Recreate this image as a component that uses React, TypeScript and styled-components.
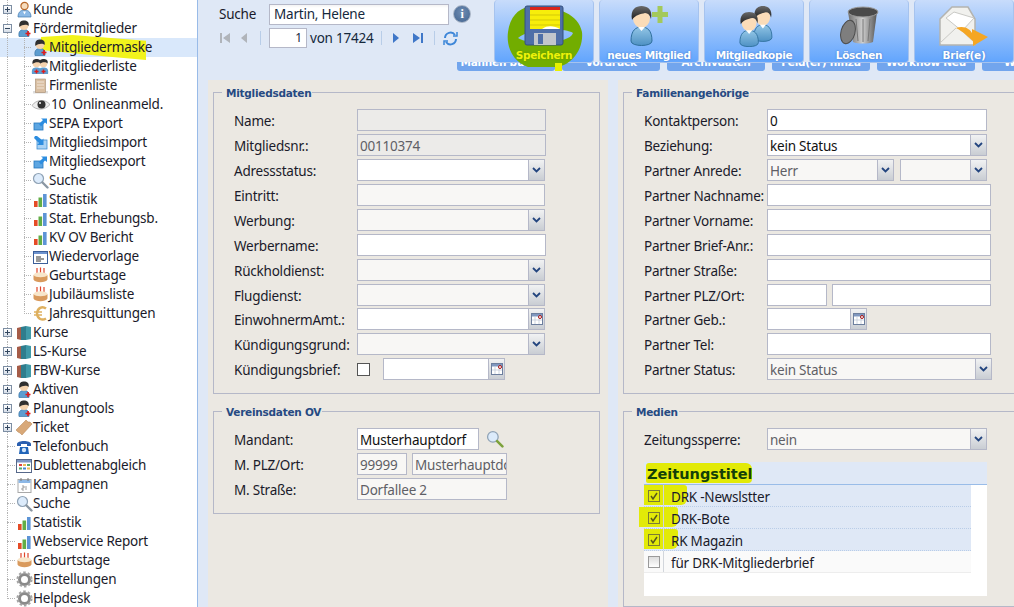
import React from 'react';
import styled, { createGlobalStyle } from 'styled-components';

const Global = createGlobalStyle`
  html, body { margin: 0; padding: 0; width: 1014px; height: 607px; overflow: hidden; background: #fff; }
  * { box-sizing: border-box; }
  body { font-family: "Noto Sans", "Liberation Sans", sans-serif; font-size: 13.5px; letter-spacing: -0.22px; color: #15283c; }
`;

const Page = styled.div`display: flex; width: 1014px; height: 607px; overflow: hidden;`;
const Sidebar = styled.nav`
  width: 198px; flex: none; height: 607px; background: #fff; border-right: 1px solid #99bbe8;
  display: flex; flex-direction: column;
`;
const TreeRow = styled.div<{ $sel?: boolean; $level: number }>`
  position: relative; height: 19px; flex: none; display: flex; align-items: center; white-space: pre;
  padding-left: ${p => (p.$level === 1 ? 31 : 15)}px; background: ${p => (p.$sel ? '#d9e8fb' : 'transparent')};
`;
const TreeIcon = styled.span<{ $w: number }>`width: ${p => p.$w}px; height: 17px; flex: none; display: flex; align-items: center; justify-content: center; position: relative; z-index: 1;`;
const TreeLabel = styled.span`font-size: 13.5px; color: #1a1a2a; position: relative; top: -1px; z-index: 1;`;
const GuideV = styled.span<{ $x: number; $half?: boolean }>`
  position: absolute; left: ${p => p.$x}px; top: 0; height: ${p => (p.$half ? '10px' : '100%')}; border-left: 1px dotted #b4b4b4;
`;
const GuideH = styled.span<{ $x: number; $w: number }>`
  position: absolute; left: ${p => p.$x}px; top: 9px; width: ${p => p.$w}px; border-top: 1px dotted #b4b4b4;
`;
const Toggle = styled.span`
  position: absolute; left: 3px; top: 5px; width: 9px; height: 9px; border: 1px solid #7d8ea3; background: linear-gradient(#fff,#d5dde8); z-index: 1;
  &::before { content: ''; position: absolute; left: 1px; right: 1px; top: 3px; height: 1px; background: #33475f; }
`;
const TogglePlus = styled(Toggle)`
  &::after { content: ''; position: absolute; top: 1px; bottom: 1px; left: 3px; width: 1px; background: #33475f; }
`;
const Hilite = styled.span`
  position: absolute; left: 41px; top: -3px; width: 105px; height: 26px; background: #f2f31c;
  clip-path: polygon(0 8%, 30% 0, 100% 22%, 100% 96%, 60% 82%, 0 58%);
`;

const Main = styled.main`flex: 1; min-width: 0; background: #dfe8f6; display: flex; flex-direction: column; position: relative;`;
const Toolbar = styled.header`height: 80px; flex: none; position: relative; overflow: hidden;`;
const SearchArea = styled.div`width: 296px; padding: 2px 0 0 21px; display: flex; flex-direction: column;`;
const SearchRow = styled.div`display: flex; align-items: center; height: 24px;`;
const SearchLabel = styled.label`width: 50px; color: #1a1a2a;`;
const SearchInput = styled.div`width: 180px; height: 21px; border: 1px solid #b5b8c8; background: linear-gradient(#f3f3f3 0,#fff 3px); padding-left: 4px; line-height: 19px;`;
const InfoDot = styled.span`
  margin-left: 4px; width: 18px; height: 18px; border-radius: 50%; background: radial-gradient(circle at 50% 40%, #6f8db3, #41638f); border: 1px solid #a9b5c6;
  color: #fff; font: bold 12px "Liberation Serif", serif; text-align: center; line-height: 16px;
`;
const PagerRow = styled.div`display: flex; align-items: center; height: 22px; margin-top: 1px;`;
const PagerBtn = styled.span<{ $gap: number }>`width: 12px; height: 16px; display: flex; align-items: center; justify-content: center; margin-right: ${p => p.$gap}px;`;
const Sep = styled.span`width: 1px; height: 14px; background: #b8cde8; margin: 0 8px 0 3px;`;
const PageInput = styled.div`width: 38px; height: 20px; border: 1px solid #b5b8c8; background: #fff; font-size: 12px; line-height: 18px; text-align: right; padding-right: 4px;`;
const PageText = styled.span`margin: 0 2px 0 3px; width: 66px; white-space: nowrap;`;

const Tabs = styled.div`position: absolute; left: 259px; top: 62px; display: flex; gap: 7px; height: 9px;`;
const SubTab = styled.div`
  width: 98px; height: 9px; background: #72a5ed; border-radius: 0 0 3px 3px; color: #fff; font-family: "DejaVu Sans", sans-serif; font-size: 10.5px; font-weight: bold; text-align: center; line-height: 1px; overflow: hidden; white-space: nowrap;
`;
const Buttons = styled.div`position: absolute; left: 296px; top: 0; display: flex; gap: 5px;`;
const Btn = styled.div`
  position: relative; width: 100px; height: 63px; background: linear-gradient(#c8dcfb, #62a5fd); border: 1px solid #a6c3ee; border-top: none; border-radius: 4px;
  display: flex; flex-direction: column; align-items: center;
`;
const BtnIcon = styled.div`height: 47px; display: flex; align-items: center; justify-content: center; margin-top: 2px; position: relative; z-index: 1;`;
const BtnText = styled.div<{ $y?: boolean }>`
  font-family: "DejaVu Sans", sans-serif; font-size: 10.5px; font-weight: bold; color: ${p => (p.$y ? '#eef20a' : '#fff')}; letter-spacing: -0.3px; position: relative; z-index: 1;
  text-shadow: 0 0 2px ${p => (p.$y ? '#5f9400' : '#3e74c4')}; line-height: 13px;
`;
const GreenRing = styled.svg`position: absolute; left: 13px; top: 7px; overflow: visible;`;

const Content = styled.div`flex: 1; display: grid; grid-template-columns: 400px 1fr; margin-left: 10px; column-gap: 10px; min-height: 0;`;
const Panel = styled.section`background: #ebe8e2; padding: 12px 8px 0 5px; height: 100%; overflow: hidden; display: flex; flex-direction: column; gap: 17px;`;
const PanelR = styled(Panel)`padding-right: 0;`;
const Field = styled.fieldset<{ $h: number; $open?: boolean }>`
  margin: 0 ${p => (p.$open ? '-12px' : '0')} 0 0; padding: 16px 0 0 16px; border: 1px solid #b5b8c8; height: ${p => p.$h}px; flex: none; position: relative; min-width: 0;
`;
const Legend = styled.span`
  position: absolute; top: -7px; left: 8px; padding: 0 1px 0 4px; background: #ebe8e2; font-size: 10.5px; font-weight: bold; line-height: 14px; color: #264a82; font-family: "DejaVu Sans", sans-serif; letter-spacing: -0.25px;
`;
const Row = styled.div<{ $up?: boolean }>`display: flex; height: 25px; align-items: flex-start; margin-top: ${p => (p.$up ? '-1px' : '0')};`;
const Lab = styled.label`width: 127px; padding-left: 4px; flex: none; line-height: 24px; color: #1a1a2a; white-space: nowrap;`;
const Input = styled.div<{ $w: number; $dis?: boolean; $grey?: boolean }>`
  width: ${p => p.$w}px; height: 22px; flex: none; border: 1px solid #b5b8c8; background: ${p => (p.$grey ? '#ecebe9' : p.$dis ? '#f8f7f5' : '#fff')};
  line-height: 22px; padding-left: 2px; overflow: hidden; white-space: nowrap; color: ${p => (p.$dis || p.$grey ? '#5f5f66' : '#111')};
`;
const Combo = styled.div<{ $w: number; $dis?: boolean }>`
  width: ${p => p.$w}px; height: 22px; flex: none; display: flex; border: 1px solid #b5b8c8; border-right: none; background: ${p => (p.$dis ? '#f8f7f5' : '#fff')};
  line-height: 22px; padding-left: 2px; color: ${p => (p.$dis ? '#5f5f66' : '#111')};
`;
const ComboText = styled.span`flex: 1; min-width: 0; height: 20px; overflow: hidden; white-space: nowrap;`;
const Trigger = styled.span`
  width: 17px; flex: none; height: 20px; background: linear-gradient(#f1f2f3,#c9cdd3); border-left: 1px solid #b5b8c8; border-right: 1px solid #b5b8c8; display: flex; align-items: center; justify-content: center;
`;
const Gap = styled.span<{ $w: number }>`width: ${p => p.$w}px; flex: none;`;
const Check = styled.span`width: 13px; height: 13px; border: 1px solid #555; background: #fff; margin-top: 5px; flex: none;`;
const Lens = styled.span`margin-left: 7px; margin-top: 2px; display: flex;`;

const Grid = styled.div`width: 343px; height: 134px; background: #fff; margin-left: 4px; margin-top: 9px;`;
const GridHead = styled.div`
  height: 23px; background: #dfe8f6; border-bottom: 1px solid #99bce8; font-family: "DejaVu Sans", sans-serif; font-weight: bold; font-size: 14.5px; letter-spacing: 0; padding-left: 3px; line-height: 24px; color: #143f08; position: relative;
`;
const HeadMark = styled.span`position: absolute; left: 2px; top: 1px; width: 106px; height: 20px; background: #e2ea08; border-radius: 3px 6px 4px 2px;`;
const HeadText = styled.span`position: relative;`;
const GridRow = styled.div<{ $on: boolean }>`
  width: 327px; height: 22px; display: flex; position: relative; background: ${p => (p.$on ? '#dfe8f6' : '#fafafa')}; border-bottom: 1px ${p => (p.$on ? 'dotted #b9cde8' : 'solid #ededed')};
  line-height: 24px; color: #1a1a2a;
`;
const CheckCell = styled.span`width: 20px; flex: none; border-right: 1px solid #d2d6dc; display: flex; align-items: center; justify-content: center; position: relative;`;
const GridText = styled.span`padding-left: 7px; position: relative;`;
const YMark = styled.span<{ $l: number; $w: number }>`position: absolute; left: ${p => p.$l}px; width: ${p => p.$w}px; top: 0; height: 20px; background: #e2ea08; border-radius: 0 3px 6px 0;`;
const Box = styled.span<{ $on: boolean }>`
  position: relative; width: 12px; height: 12px; border: 1px solid ${p => (p.$on ? '#7c7c35' : '#9a9a9a')}; background: ${p => (p.$on ? 'transparent' : 'linear-gradient(#ddd,#fff)')}; display: flex; align-items: center; justify-content: center;
`;
const CopyIcon = styled.span`display: flex; margin-left: 4px;`;
const CheckMark = styled.svg`position: absolute;`;

const person = (
  <svg width="15" height="17" viewBox="0 0 15 17">
    <path d="M2 16.500 C1 11 4 9.500 7 9.500 C10 9.500 13 11 12 16.500 Z" fill="#5d9dd0" stroke="#2e6a9c" strokeWidth=".6" />
    <circle cx="7" cy="5.500" r="4.500" fill="#f5d3ae" />
    <path d="M2.400 7 C1.500 1.500 4.500 .5 7 .5 C10 .5 12.500 2 11.600 6 C10 4 5 4.500 2.400 7Z" fill="#2f2f2f" />
    <path d="M8.500 13.500h5M11 11v5" stroke="#e01b1b" strokeWidth="1.600" />
  </svg>
);
const kunde = (
  <svg width="17" height="17" viewBox="0 0 17 17">
    <path d="M2 16 C2 10 6 9 8.500 9 C11 9 15 10 15 16 Z" fill="#8bb9e6" stroke="#3f78ae" strokeWidth=".7" />
    <circle cx="8.500" cy="5" r="3.600" fill="#f6dcbd" stroke="#b9692a" strokeWidth="1.200" />
    <path d="M7 10.500h3l-1.500 3z" fill="#fff" />
  </svg>
);
const onePerson = (x: number) => (
  <g transform={`translate(${x} 0)`}>
    <path d="M1 16 C0 10 3 9.500 5.500 9.500 C8 9.500 11 10 10 16 Z" fill="#5d9dd0" />
    <circle cx="5.500" cy="5.500" r="3.800" fill="#f5d3ae" />
    <path d="M1.500 6 C1 1.500 3.500 1 5.500 1 C8 1 10.400 2 9.600 5.500 C8 3.800 4 4 1.500 6Z" fill="#2f2f2f" />
    <path d="M3.500 13.500h4M5.500 11.500v4" stroke="#e01b1b" strokeWidth="1.400" />
  </g>
);
const persons = <svg width="18" height="17" viewBox="0 0 18 17">{onePerson(7)}{onePerson(0)}</svg>;
const building = (
  <svg width="17" height="17" viewBox="0 0 17 17">
    <rect x="1" y="14" width="15" height="2.500" fill="#ddd" />
    <rect x="3.500" y="2" width="10" height="13.500" fill="#d9bfa2" stroke="#a68d72" strokeWidth=".6" />
    <path d="M5 5h7M5 8h7M5 11h7" stroke="#f2e6d8" strokeWidth="1.200" />
  </svg>
);
const eye = (
  <svg width="20" height="14" viewBox="0 0 20 13">
    <path d="M1 7 C5 1 14 0 19 6 C14 12 5 12 1 7Z" fill="#eee" stroke="#999" strokeWidth=".7" />
    <circle cx="10.500" cy="6" r="4" fill="#333" /><circle cx="9" cy="4.500" r="1" fill="#fff" />
  </svg>
);
const exportI = (
  <svg width="15" height="14" viewBox="0 0 15 14">
    <rect x="1" y="6" width="9" height="7" fill="#5da6e2" stroke="#2477bd" strokeWidth=".8" />
    <path d="M6 7 L10 3 L8 1.500 H14 V7 L12 5.500 L8 9.500Z" fill="#2c8de0" />
  </svg>
);
const importI = (
  <svg width="15" height="15" viewBox="0 0 15 15">
    <rect x="4" y="5" width="10" height="9" fill="#a9d2f4" stroke="#3f8ed2" strokeWidth=".8" />
    <path d="M2 1 L4 1 L9 5 L10.500 3.500 V10 H4 L6 8 L1 3Z" fill="#2c8de0" />
  </svg>
);
const search = (s: number, handle: string) => (
  <svg width={s} height={s} viewBox="0 0 17 17">
    <circle cx="6.500" cy="6.500" r="5" fill="#dcebfb" stroke="#8fa2b5" strokeWidth="1.200" />
    <path d="M10.500 10.500 L15.500 15.500" stroke={handle} strokeWidth="2.400" strokeLinecap="round" />
  </svg>
);
const stats = (
  <svg width="15" height="14" viewBox="0 0 15 14">
    <rect x="1" y="8" width="3.600" height="6" fill="#e54b26" />
    <rect x="5.500" y="4.500" width="3.600" height="9.500" fill="#62ad46" />
    <rect x="10" y="1" width="3.600" height="13" fill="#5d94d6" />
  </svg>
);
const resub = (
  <svg width="15" height="14" viewBox="0 0 15 14">
    <rect x=".5" y="1.500" width="14" height="12" fill="#fff" stroke="#3c5f9a" />
    <rect x="1" y="2" width="13" height="2" fill="#6e93cf" />
    <path d="M3 7h5M3 9h8M3 11h5" stroke="#333" />
  </svg>
);
const cake = (
  <svg width="17" height="17" viewBox="0 0 17 17">
    <path d="M5 1v6M8.500 .5v6.500M12 1v6" stroke="#e0452a" strokeWidth="1.200" />
    <ellipse cx="8.500" cy="8" rx="7" ry="2.800" fill="#f8e6cb" />
    <path d="M1.500 8 V12.500 C3 16 14 16 15.500 12.500 V8 C14 11 3 11 1.500 8Z" fill="#d99a5d" />
  </svg>
);
const euro = (
  <svg width="17" height="17" viewBox="0 0 17 17">
    <path d="M14 3.500 C10 .5 5.500 3 5 8.500 C5.500 14 10 16 14 13.500" fill="none" stroke="#deb05f" strokeWidth="2.500" />
    <path d="M2 7h8M2 10h8" stroke="#deb05f" strokeWidth="1.500" />
  </svg>
);
const books = (
  <svg width="16" height="16" viewBox="0 0 16 16">
    <path d="M1 3l4-1v13l-4-1z" fill="#a55c48" />
    <path d="M5 2l5-1v14H5z" fill="#2f7d8d" />
    <path d="M10 1l5 1v12l-5 1z" fill="#3f99a8" />
  </svg>
);
const ticket = (
  <svg width="18" height="17" viewBox="0 0 18 17">
    <path d="M1 11 L11 1 L13 3 L15 3 L17 5 L7 16 L5 14 L3 13Z" fill="#d8a878" stroke="#b27f4d" strokeWidth=".5" />
  </svg>
);
const phone = (
  <svg width="16" height="16" viewBox="0 0 16 16">
    <path d="M1 5 C1 1 15 1 15 5 V7 H11 V5 H5 V7 H1Z" fill="#2a5fb0" />
    <path d="M3 15 L4 8 H12 L13 15Z" fill="#1f63b8" /><circle cx="8" cy="11" r="2.200" fill="#cfe4fa" />
  </svg>
);
const dup = (
  <svg width="16" height="15" viewBox="0 0 16 15">
    <rect x=".5" y="1.500" width="15" height="13" fill="#fff" stroke="#56688a" />
    <rect x="1" y="2" width="14" height="2.500" fill="#7d96c4" />
    <path d="M3 6h3v2H3z" fill="#d44" /><path d="M7 6h3v2H7z" fill="#eb5" /><path d="M11 6h3v2h-3z" fill="#5a6" /><path d="M3 9.500h3v2H3z" fill="#5a6" /><path d="M7 9.500h3v2H7z" fill="#48c" /><path d="M11 9.500h3v2h-3z" fill="#eb5" />
  </svg>
);
const cal = (
  <svg width="15" height="16" viewBox="0 0 15 16">
    <rect x="1" y="2.500" width="13" height="13" fill="#fff" stroke="#a9a9a9" />
    <rect x="1.500" y="3" width="12" height="3" fill="#8db8e6" />
    <path d="M4 1v3M11 1v3" stroke="#777" />
    <path d="M5 9h2v2H5v2h2M9 9v4" fill="none" stroke="#888" strokeWidth=".8" />
  </svg>
);
const gear = (
  <svg width="17" height="17" viewBox="0 0 17 17">
    <circle cx="8.500" cy="8.500" r="5" fill="none" stroke="#8a8a8a" strokeWidth="3" />
    <circle cx="8.500" cy="8.500" r="7" fill="none" stroke="#a5a5a5" strokeWidth="2.200" strokeDasharray="2.500 2.000" />
  </svg>
);

type Node = { label: string; icon: React.ReactNode; level: 0 | 1; toggle?: '+' | '-'; sel?: boolean; hi?: boolean; wide?: boolean; last?: boolean };
const tree: Node[] = [
  { label: 'Kunde', icon: kunde, level: 0, toggle: '+' },
  { label: 'Fördermitglieder', icon: person, level: 0, toggle: '-' },
  { label: 'Mitgliedermaske', icon: person, level: 1, sel: true, hi: true },
  { label: 'Mitgliederliste', icon: persons, level: 1 },
  { label: 'Firmenliste', icon: building, level: 1 },
  { label: '10  Onlineanmeld.', icon: eye, level: 1, wide: true },
  { label: 'SEPA Export', icon: exportI, level: 1 },
  { label: 'Mitgliedsimport', icon: importI, level: 1 },
  { label: 'Mitgliedsexport', icon: exportI, level: 1 },
  { label: 'Suche', icon: search(17, '#8b97a3'), level: 1 },
  { label: 'Statistik', icon: stats, level: 1 },
  { label: 'Stat. Erhebungsb.', icon: stats, level: 1 },
  { label: 'KV OV Bericht', icon: stats, level: 1 },
  { label: 'Wiedervorlage', icon: resub, level: 1 },
  { label: 'Geburtstage', icon: cake, level: 1 },
  { label: 'Jubiläumsliste', icon: cake, level: 1 },
  { label: 'Jahresquittungen', icon: euro, level: 1, last: true },
  { label: 'Kurse', icon: books, level: 0, toggle: '+' },
  { label: 'LS-Kurse', icon: books, level: 0, toggle: '+' },
  { label: 'FBW-Kurse', icon: books, level: 0, toggle: '+' },
  { label: 'Aktiven', icon: person, level: 0, toggle: '+' },
  { label: 'Planungtools', icon: person, level: 0, toggle: '+' },
  { label: 'Ticket', icon: ticket, level: 0, toggle: '+' },
  { label: 'Telefonbuch', icon: phone, level: 0 },
  { label: 'Dublettenabgleich', icon: dup, level: 0 },
  { label: 'Kampagnen', icon: cal, level: 0 },
  { label: 'Suche', icon: search(17, '#8b97a3'), level: 0 },
  { label: 'Statistik', icon: stats, level: 0 },
  { label: 'Webservice Report', icon: stats, level: 0 },
  { label: 'Geburtstage', icon: cake, level: 0 },
  { label: 'Einstellungen', icon: gear, level: 0 },
  { label: 'Helpdesk', icon: gear, level: 0, last: true },
];

const Arrow = () => (
  <svg width="9" height="6" viewBox="0 0 9 6"><path d="M1 1 L4.500 4.500 L8 1" fill="none" stroke="#23457f" strokeWidth="1.800" /></svg>
);
const CalIcon = () => (
  <svg width="12" height="12" viewBox="0 0 12 12">
    <rect x=".5" y=".5" width="11" height="11" fill="#fff" stroke="#6d7f9e" />
    <rect x="1" y="1" width="10" height="2.500" fill="#7f97bf" />
    <path d="M4 4v7M8 4v7M1 7h10" stroke="#c3ccd9" strokeWidth=".8" />
    <circle cx="9" cy="4" r="1.500" fill="#fff" stroke="#a11" />
  </svg>
);
const Sel = ({ w, dis, v }: { w: number; dis?: boolean; v?: string }) => (
  <Combo $w={w} $dis={dis}><ComboText>{v}</ComboText><Trigger><Arrow /></Trigger></Combo>
);
const DateF = ({ w }: { w: number }) => (
  <Combo $w={w}><ComboText /><Trigger><CalIcon /></Trigger></Combo>
);

const floppy = (
  <svg width="40" height="42" viewBox="0 0 40 42">
    <rect x="1" y="1" width="38" height="39" rx="2" fill="#4f6fa8" stroke="#34507f" />
    <rect x="6" y="2" width="30" height="22" fill="#f7ee0a" />
    <rect x="6" y="2" width="30" height="3" fill="#d8261c" />
    <path d="M6 10h30M6 15h30M6 20h30" stroke="#d3c908" />
    <path d="M18 24 C24 20 30 21 36 24Z" fill="#fff" />
    <rect x="10" y="28" width="22" height="12" fill="#c2c6cc" />
    <rect x="14" y="29" width="5" height="10" fill="#4f6fa8" />
  </svg>
);
const bigPerson = (id: string) => (
  <>
    <defs>
      <linearGradient id={id} x1="0" y1="0" x2="0" y2="1"><stop offset="0" stopColor="#93c6e6" /><stop offset="1" stopColor="#4e91c4" /></linearGradient>
      <linearGradient id={`${id}h`} x1="0" y1="0" x2="0" y2="1"><stop offset="0" stopColor="#6a6a6a" /><stop offset="1" stopColor="#1d1d1d" /></linearGradient>
    </defs>
    <path d="M1 36 C1 25 6 22 11.500 22 C17 22 22 25 22 36 C22 42 1 42 1 36Z" fill={`url(#${id})`} stroke="#2f6f9d" />
    <ellipse cx="11.500" cy="13" rx="8.500" ry="10" fill="#fbdcb8" />
    <path d="M2 15 C0 4 6 1 11.500 1 C17 1 23 4 21 14 C20 10 18 8 15 8 C11 9 5 10 2 15Z" fill={`url(#${id}h)`} />
    <path d="M8 22 L11.500 26 L15 22Z" fill="#fff" />
  </>
);
const newMember = (
  <svg width="38" height="42" viewBox="0 0 38 42">
    {bigPerson('pa')}
    <path d="M30 1v17M22 9.500h16" stroke="#a3c95a" strokeWidth="5" />
  </svg>
);
const copyMember = (
  <svg width="34" height="42" viewBox="0 0 34 42">
    <g transform="translate(14 0) scale(.86 .9)">{bigPerson('pb')}</g>
    <g transform="translate(0 6) scale(.88 .88)">{bigPerson('pc')}</g>
  </svg>
);
const trash = (
  <svg width="40" height="40" viewBox="0 0 40 40">
    <defs><linearGradient id="tg" x1="0" x2="1"><stop offset="0" stopColor="#6f6f6f" /><stop offset=".5" stopColor="#cfcfcf" /><stop offset="1" stopColor="#555" /></linearGradient></defs>
    <path d="M9 6 L38 6 L34 36 C29 38 19 38 14 36Z" fill="url(#tg)" />
    <ellipse cx="24" cy="6" rx="15" ry="5" fill="#4a4a4a" stroke="#9a9a9a" />
    <path d="M17 13l2 22M24 13v23M31 13l-2 22" stroke="#777" />
    <ellipse cx="9" cy="26" rx="7" ry="12" fill="#7e7e7e" stroke="#4c4c4c" transform="rotate(15 9 26)" />
  </svg>
);
const letter = (
  <svg width="52" height="42" viewBox="0 0 52 42">
    <path d="M2 14 L14 2 H30 L37 14 V40 H2Z" fill="#f1f1ee" stroke="#b4b4b0" strokeWidth="1.500" />
    <path d="M8 13 L16 7 L36 13 L24 26Z" fill="#fff" stroke="#c9c9c5" />
    <path d="M2 38 L18 23 M37 38 L24 26" stroke="#c9c9c5" />
    <path d="M18 23 C26 20 32 24 34 28 V24 L50 32 L35 41 V36 C30 32 26 27 18 23Z" fill="#f5a623" />
  </svg>
);

const Tri = ({ d, c }: { d: string; c: string }) => (
  <svg width="12" height="12" viewBox="0 0 12 12"><path d={d} fill={c} /></svg>
);
const Refresh = () => (
  <svg width="15" height="15" viewBox="0 0 15 15" fill="none" stroke="#3d86d8" strokeWidth="2">
    <path d="M2 7 A5.500 5.500 0 0 1 12 4" /><path d="M13 8 A5.500 5.500 0 0 1 3 11" />
    <path d="M10 5h4V1" strokeWidth="1.500" /><path d="M5 10H1v4" strokeWidth="1.500" />
  </svg>
);
const Check2 = () => (
  <CheckMark width="10" height="10" viewBox="0 0 10 10"><path d="M2 5 L4 8 L8 2" fill="none" stroke="#57571d" strokeWidth="1.500" /></CheckMark>
);

const zeitung = [
  { t: 'DRK -Newslstter', on: true, m: [0, 43] as [number, number] },
  { t: 'DRK-Bote', on: true, m: [-5, 39] as [number, number] },
  { t: 'RK Magazin', on: true, m: [0, 34] as [number, number] },
  { t: 'für DRK-Mitgliederbrief', on: false, m: null },
];

export default function App() {
  return (
    <Page>
      <Global />
      <Sidebar>
        {tree.map((n, i) => (
          <TreeRow key={i} $level={n.level} $sel={n.sel}>
            {n.hi && <Hilite />}
            <GuideV $x={7} $half={n.label === 'Helpdesk'} />
            {n.level === 1 && <GuideV $x={24} $half={n.last} />}
            {n.level === 1 ? <GuideH $x={24} $w={7} /> : !n.toggle && <GuideH $x={7} $w={8} />}
            {n.toggle === '+' && <TogglePlus />}
            {n.toggle === '-' && <Toggle />}
            <TreeIcon $w={n.wide ? 20 : 18}>{n.icon}</TreeIcon>
            <TreeLabel>{n.label}</TreeLabel>
          </TreeRow>
        ))}
      </Sidebar>
      <Main>
        <Toolbar>
          <SearchArea>
            <SearchRow>
              <SearchLabel>Suche</SearchLabel>
              <SearchInput>Martin, Helene</SearchInput>
              <InfoDot>i</InfoDot>
            </SearchRow>
            <PagerRow>
              <PagerBtn $gap={7}><Tri d="M1 1h2v10H1zM11 1v10L4 6z" c="#b0b4ba" /></PagerBtn>
              <PagerBtn $gap={7}><Tri d="M9 1v10L3 6z" c="#b0b4ba" /></PagerBtn>
              <Sep />
              <PageInput>1</PageInput>
              <PageText>von 17424</PageText>
              <Sep />
              <PagerBtn $gap={10}><Tri d="M3 1v10l6-5z" c="#3f77c8" /></PagerBtn>
              <PagerBtn $gap={7}><Tri d="M1 1v10l7-5zM9 1h2v10H9z" c="#3f77c8" /></PagerBtn>
              <Sep />
              <Refresh />
            </PagerRow>
          </SearchArea>
          <Tabs>
            <SubTab>Mahnen buchen</SubTab>
            <SubTab>Vordruck</SubTab>
            <SubTab>Archivdaten</SubTab>
            <SubTab>Feld(er) hinzu</SubTab>
            <SubTab>Workflow Neu</SubTab>
            <SubTab>Workflow</SubTab>
          </Tabs>
          <Buttons>
            <Btn>
              <GreenRing width="75" height="62" viewBox="0 0 75 62">
                <path fillRule="evenodd" fill="#72ad00" d="M20 0 C45 -2 70 5 74 25 C76 45 60 61 45 60 L20 60 C5 55 -2 40 0 25 C2 10 10 2 20 0Z M10 31 C20 22 55 20 65 26 C62 36 25 40 10 31Z" />
                <rect x="47" y="56" width="7" height="8" fill="#e8f000" />
              </GreenRing>
              <BtnIcon>{floppy}</BtnIcon>
              <BtnText $y>Speichern</BtnText>
            </Btn>
            <Btn><BtnIcon>{newMember}</BtnIcon><BtnText>neues Mitglied</BtnText></Btn>
            <Btn><BtnIcon><CopyIcon>{copyMember}</CopyIcon></BtnIcon><BtnText>Mitgliedkopie</BtnText></Btn>
            <Btn><BtnIcon>{trash}</BtnIcon><BtnText>Löschen</BtnText></Btn>
            <Btn><BtnIcon>{letter}</BtnIcon><BtnText>Brief(e)</BtnText></Btn>
          </Buttons>
        </Toolbar>
        <Content>
          <Panel>
            <Field $h={302}>
              <Legend>Mitgliedsdaten</Legend>
              <Row><Lab>Name:</Lab><Input $w={189} $grey /></Row>
              <Row><Lab>Mitgliedsnr.:</Lab><Input $w={189} $grey>00110374</Input></Row>
              <Row><Lab>Adressstatus:</Lab><Sel w={188} /></Row>
              <Row><Lab>Eintritt:</Lab><Input $w={188} $dis /></Row>
              <Row><Lab>Werbung:</Lab><Sel w={188} dis /></Row>
              <Row><Lab>Werbername:</Lab><Input $w={189} /></Row>
              <Row><Lab>Rückholdienst:</Lab><Sel w={188} dis /></Row>
              <Row><Lab>Flugdienst:</Lab><Sel w={188} dis /></Row>
              <Row $up><Lab>EinwohnermAmt.:</Lab><DateF w={188} /></Row>
              <Row><Lab>Kündigungsgrund:</Lab><Sel w={188} dis /></Row>
              <Row><Lab>Kündigungsbrief:</Lab><Check /><Gap $w={13} /><DateF w={122} /></Row>
            </Field>
            <Field $h={103}>
              <Legend>Vereinsdaten OV</Legend>
              <Row><Lab>Mandant:</Lab><Input $w={122}>Musterhauptdorf</Input><Lens>{search(18, '#7da23c')}</Lens></Row>
              <Row><Lab>M. PLZ/Ort:</Lab><Input $w={50} $dis>99999</Input><Gap $w={5} /><Input $w={95} $dis>Musterhauptdorf</Input></Row>
              <Row><Lab>M. Straße:</Lab><Input $w={150} $dis>Dorfallee 2</Input></Row>
            </Field>
          </Panel>
          <PanelR>
            <Field $h={302} $open>
              <Legend>Familienangehörige</Legend>
              <Row><Lab>Kontaktperson:</Lab><Input $w={220}>0</Input></Row>
              <Row><Lab>Beziehung:</Lab><Sel w={220} v="kein Status" /></Row>
              <Row><Lab>Partner Anrede:</Lab><Sel w={127} dis v="Herr" /><Gap $w={6} /><Sel w={87} dis /></Row>
              <Row><Lab>Partner Nachname:</Lab><Input $w={224} /></Row>
              <Row><Lab>Partner Vorname:</Lab><Input $w={224} /></Row>
              <Row><Lab>Partner Brief-Anr.:</Lab><Input $w={224} /></Row>
              <Row><Lab>Partner Straße:</Lab><Input $w={224} /></Row>
              <Row><Lab>Partner PLZ/Ort:</Lab><Input $w={60} /><Gap $w={5} /><Input $w={159} /></Row>
              <Row $up><Lab>Partner Geb.:</Lab><DateF w={100} /></Row>
              <Row><Lab>Partner Tel:</Lab><Input $w={224} /></Row>
              <Row><Lab>Partner Status:</Lab><Sel w={225} dis v="kein Status" /></Row>
            </Field>
            <Field $h={196} $open>
              <Legend>Medien</Legend>
              <Row><Lab>Zeitungssperre:</Lab><Sel w={220} dis v="nein" /></Row>
              <Grid>
                <GridHead><HeadMark /><HeadText>Zeitungstitel</HeadText></GridHead>
                {zeitung.map(z => (
                  <GridRow key={z.t} $on={z.on}>
                    {z.m && <YMark $l={z.m[0]} $w={z.m[1]} />}
                    <CheckCell><Box $on={z.on}>{z.on && <Check2 />}</Box></CheckCell>
                    <GridText>{z.t}</GridText>
                  </GridRow>
                ))}
              </Grid>
            </Field>
          </PanelR>
        </Content>
      </Main>
    </Page>
  );
}
